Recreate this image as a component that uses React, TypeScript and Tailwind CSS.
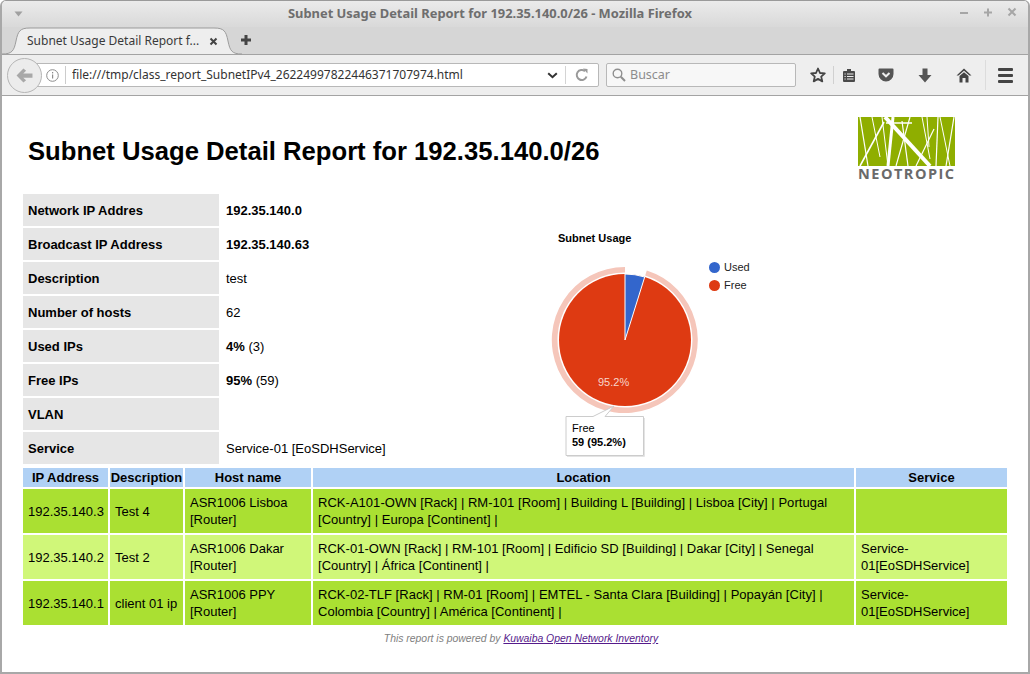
import { ReactNode } from 'react';

const info: { label: string; value: ReactNode }[] = [
  { label: 'Network IP Addres', value: <b>192.35.140.0</b> },
  { label: 'Broadcast IP Address', value: <b>192.35.140.63</b> },
  { label: 'Description', value: 'test' },
  { label: 'Number of hosts', value: '62' },
  { label: 'Used IPs', value: <span><b>4%</b> (3)</span> },
  { label: 'Free IPs', value: <span><b>95%</b> (59)</span> },
  { label: 'VLAN', value: '' },
  { label: 'Service', value: 'Service-01 [EoSDHService]' },
];

const rows = [
  {
    ip: '192.35.140.3',
    desc: 'Test 4',
    host: 'ASR1006 Lisboa [Router]',
    location: 'RCK-A101-OWN [Rack] | RM-101 [Room] | Building L [Building] | Lisboa [City] | Portugal [Country] | Europa [Continent] |',
    service: '',
    bg: 'bg-[#aae032]',
  },
  {
    ip: '192.35.140.2',
    desc: 'Test 2',
    host: 'ASR1006 Dakar [Router]',
    location: 'RCK-01-OWN [Rack] | RM-101 [Room] | Edificio SD [Building] | Dakar [City] | Senegal [Country] | África [Continent] |',
    service: 'Service-01[EoSDHService]',
    bg: 'bg-[#d0f779]',
  },
  {
    ip: '192.35.140.1',
    desc: 'client 01 ip',
    host: 'ASR1006 PPY [Router]',
    location: 'RCK-02-TLF [Rack] | RM-01 [Room] | EMTEL - Santa Clara [Building] | Popayán [City] | Colombia [Country] | América [Continent] |',
    service: 'Service-01[EoSDHService]',
    bg: 'bg-[#aae032]',
  },
];

function Logo() {
  return (
    <div className="flex w-[97px] flex-col">
      <svg width="97" height="49" viewBox="0 0 97 49" className="block">
        <rect width="97" height="49" fill="#8fae00" />
        <g stroke="#fff" fill="none">
          <path d="M2 0 L10 49" strokeWidth="1.2" />
          <path d="M14 0 L22 40" strokeWidth="1" />
          <path d="M26 5 L2 49" strokeWidth="1.6" />
          <path d="M24 0 L30 49" strokeWidth="1" />
          <path d="M27 0 L72 49" strokeWidth="4" />
          <path d="M35 0 L30 49" strokeWidth="3" />
          <path d="M44 4 L50 49" strokeWidth="1.2" />
          <path d="M52 0 L38 49" strokeWidth="1.2" />
          <path d="M64 0 L72 42" strokeWidth="1" />
          <path d="M76 12 L58 49" strokeWidth="1.2" />
          <path d="M69 0 L71 30" strokeWidth="1" />
          <path d="M80 0 L78 49" strokeWidth="1.2" />
          <path d="M82 0 L92 49" strokeWidth="1" />
          <path d="M96 0 L88 49" strokeWidth="1.2" />
          <path d="M28 6 L54 6" strokeWidth="1.6" />
        </g>
      </svg>
      <div className="mt-[1px] font-['Open_Sans',sans-serif] text-[14.5px] leading-[14px] font-bold tracking-[1.5px] whitespace-nowrap text-[#6a6a6a]">
        NEOTROPIC
      </div>
    </div>
  );
}

function Chart() {
  return (
    <svg width="230" height="240" viewBox="540 225 230 240" className="block font-['Liberation_Sans',sans-serif]">
      <text x="558" y="242" fontSize="11" fontWeight="700" fill="#000">Subnet Usage</text>
      {/* ring around the selected slice */}
      <path
        d="M646.8 270.4 A73 73 0 1 1 625 267 L625 272.5 A67.5 67.5 0 1 0 645.2 275.6 Z"
        fill="#f5c6ba"
      />
      <circle cx="625" cy="340" r="66" fill="#de3a12" />
      <path d="M625 340 L625 274 A66 66 0 0 1 644.7 277 Z" fill="#3366cc" stroke="#fff" strokeWidth="1" />
      <text x="598" y="386" fontSize="11" fill="#f7d6cc">95.2%</text>
      <circle cx="714.5" cy="267.5" r="5.5" fill="#3366cc" />
      <text x="724" y="271" fontSize="11" fill="#222">Used</text>
      <circle cx="714.5" cy="285.5" r="5.5" fill="#de3a12" />
      <text x="724" y="289" fontSize="11" fill="#222">Free</text>
      {/* tooltip with its pointer */}
      <path
        d="M566 416.5 L593 416.5 L614 406 L605 416.5 L643.5 416.5 L643.5 455.5 L566 455.5 Z"
        fill="#fff"
        stroke="#ccc"
        strokeWidth="1"
      />
      <path d="M644.5 418 L644.5 456.5 L567 456.5" fill="none" stroke="#e4e4e4" strokeWidth="1" />
      <text x="572" y="432" fontSize="11" fill="#000">Free</text>
      <text x="572" y="446" fontSize="11" fontWeight="700" fill="#000">59 (95.2%)</text>
    </svg>
  );
}

function Toolbar() {
  return (
    <div className="relative flex h-[41px] items-center border-b border-[#a3a3a3] bg-[#eeeeee] pl-[23px]">
      {/* back button sits over the start of the url bar */}
      <div className="absolute top-[3px] left-[5px] z-10 flex h-[35px] w-[35px] items-center justify-center rounded-full border border-[#b5b5b5] bg-[#ececec]">
        <svg width="17" height="15" viewBox="0 0 16 14">
          <path d="M7 0.5 L0.5 7 L7 13.5 L9.5 11.5 L6.8 9 L15.5 9 L15.5 5 L6.8 5 L9.5 2.5 Z" fill="#a8a8a8" />
        </svg>
      </div>
      <div className="flex h-[24px] w-[574px] items-center rounded-[2px] border border-[#b8b8b8] bg-white pl-[20px]">
        <svg width="13" height="13" viewBox="0 0 13 13" className="shrink-0">
          <circle cx="6.5" cy="6.5" r="5.8" fill="none" stroke="#8c8c8c" />
          <rect x="6" y="5.5" width="1.2" height="4" fill="#8c8c8c" />
          <rect x="6" y="3" width="1.2" height="1.4" fill="#8c8c8c" />
        </svg>
        <div className="mx-[6px] h-[18px] w-px bg-[#cccccc]" />
        <span className="flex-1 truncate font-['Noto_Sans',sans-serif] text-[12px] text-[#333]">file:///tmp/class_report_SubnetIPv4_26224997822446371707974.html</span>
        <svg width="11" height="7" viewBox="0 0 11 7" className="mr-[7px]">
          <path d="M1.2 1.2 L5.5 5.2 L9.8 1.2" fill="none" stroke="#333" strokeWidth="2" />
        </svg>
        <div className="h-[18px] w-px bg-[#d4d4d4]" />
        <svg width="14" height="14" viewBox="0 0 14 14" className="mx-[9px]">
          <path d="M11.5 8.5 A5 5 0 1 1 10 3.2" fill="none" stroke="#9a9a9a" strokeWidth="2" />
          <path d="M8 0.5 L12.5 1 L12.5 5.5 Z" fill="#9a9a9a" />
        </svg>
      </div>
      <div className="ml-[7px] flex h-[24px] w-[190px] items-center rounded-[2px] border border-[#b8b8b8] bg-[#f7f7f7] pl-[5px]">
        <svg width="14" height="14" viewBox="0 0 14 14">
          <circle cx="5.5" cy="5.5" r="4.3" fill="none" stroke="#8f8f8f" strokeWidth="1.4" />
          <path d="M8.8 8.8 L13 13" stroke="#8f8f8f" strokeWidth="2" />
        </svg>
        <span className="ml-[4px] font-['Noto_Sans',sans-serif] text-[12.5px] text-[#8c8c8c]">Buscar</span>
      </div>
      <svg width="16" height="16" viewBox="0 0 16 16" className="ml-[14px]">
        <path d="M8 1.5 L10 6 L14.8 6.4 L11.2 9.6 L12.3 14.4 L8 11.9 L3.7 14.4 L4.8 9.6 L1.2 6.4 L6 6 Z" fill="none" stroke="#444" strokeWidth="1.8" strokeLinejoin="round" />
      </svg>
      <div className="ml-[7px] h-[18px] w-px bg-[#d0d0d0]" />
      <svg width="14" height="15" viewBox="0 0 14 15" className="ml-[8px]">
        <path d="M1 4 Q1 3 2 3 H5 V1 H9 V3 H12 Q13 3 13 4 V13 Q13 14 12 14 H2 Q1 14 1 13 Z" fill="#4a4a4a" />
        <path d="M5 6 H11.5 M5 8.5 H11.5 M5 11 H11.5 M2.5 6 H3.7 M2.5 8.5 H3.7 M2.5 11 H3.7" stroke="#eee" strokeWidth="1" />
      </svg>
      <svg width="16" height="14" viewBox="0 0 16 14" className="ml-[22px]">
        <path d="M1.5 0.5 H14.5 A1 1 0 0 1 15.5 1.5 V6 A7.5 7.5 0 0 1 0.5 6 V1.5 A1 1 0 0 1 1.5 0.5 Z" fill="#555" />
        <path d="M4.5 5 L8 8.3 L11.5 5" fill="none" stroke="#eee" strokeWidth="2" />
      </svg>
      <svg width="14" height="15" viewBox="0 0 14 15" className="ml-[24px]">
        <path d="M4.5 0.5 H9.5 V7 H13.5 L7 14.5 L0.5 7 H4.5 Z" fill="#555" />
      </svg>
      <svg width="16" height="15" viewBox="0 0 16 15" className="ml-[24px]">
        <path d="M8 0.5 L15.5 7.5 L13.5 7.5 L8 2.8 L2.5 7.5 L0.5 7.5 Z" fill="#444" />
        <path d="M3.5 8 L8 4.2 L12.5 8 V14.5 H9.5 V10 H6.5 V14.5 H3.5 Z" fill="#444" />
      </svg>
      <div className="ml-[13px] h-[30px] w-px bg-[#dcdcdc]" />
      <div className="ml-[12px] flex w-[15px] flex-col gap-[3px]">
        <div className="h-[3px] rounded-[1px] bg-[#444]" />
        <div className="h-[3px] rounded-[1px] bg-[#444]" />
        <div className="h-[3px] rounded-[1px] bg-[#444]" />
      </div>
    </div>
  );
}

export default function App() {
  return (
    <div className="flex h-[674px] w-[1030px] flex-col overflow-hidden rounded-t-[6px] border-x-2 border-b-2 border-t border-x-[#a8a8a8] border-b-[#a8a8a8] border-t-[#9a9a9a] bg-white font-['Liberation_Sans',sans-serif] text-[13px] text-black">
      {/* title bar */}
      <div className="relative flex h-[26px] shrink-0 items-center justify-center bg-gradient-to-b from-[#ebebeb] to-[#d9d9d9] pr-[50px] font-['Noto_Sans',sans-serif] text-[12.9px] font-bold text-[#6e6e6e]">
        <svg width="9" height="6" viewBox="0 0 9 6" className="absolute top-[10px] left-[12px]">
          <path d="M0.5 0.5 H8.5 L4.5 5.5 Z" fill="#a0a0a0" />
        </svg>
        Subnet Usage Detail Report for 192.35.140.0/26 - Mozilla Firefox
        <div className="absolute top-[6px] right-[11px] flex items-center gap-[14px]">
          <svg width="10" height="10" viewBox="0 0 10 10"><path d="M1 6 H9" stroke="#a6a6a6" strokeWidth="2" /></svg>
          <svg width="10" height="10" viewBox="0 0 10 10"><path d="M1 5.5 H9 M5 1.5 V9.5" stroke="#a6a6a6" strokeWidth="2" /></svg>
          <svg width="10" height="10" viewBox="0 0 10 10"><path d="M1.5 1.5 L8.5 8.5 M8.5 1.5 L1.5 8.5" stroke="#a6a6a6" strokeWidth="2" /></svg>
        </div>
      </div>
      {/* tab strip */}
      <div className="relative flex h-[28px] shrink-0 items-end border-b border-[#a3a3a3] bg-[#d6d6d6]">
        <svg width="240" height="28" viewBox="0 0 240 28" className="absolute top-0 left-0">
          <path d="M0 27 C10 27 12 24 14 14 C16 4 18 1 28 1 H212 C222 1 224 4 226 14 C228 24 230 27 240 27 Z" fill="#eeeeee" stroke="none" />
          <path d="M0 27 C10 27 12 24 14 14 C16 4 18 1 28 1 H212 C222 1 224 4 226 14 C228 24 230 27 240 27" fill="none" stroke="#9c9c9c" />
        </svg>
        <div className="relative flex h-[27px] w-[230px] items-center pl-[25px] font-['Noto_Sans',sans-serif] text-[12px] whitespace-nowrap text-[#3a3a3a]">
          Subnet Usage Detail Report f...
          <svg width="9" height="9" viewBox="0 0 9 9" className="absolute top-[10px] left-[207px]">
            <path d="M1.5 1.5 L7.5 7.5 M7.5 1.5 L1.5 7.5" stroke="#444" strokeWidth="2" />
          </svg>
        </div>
        <svg width="10" height="10" viewBox="0 0 10 10" className="relative mb-[9px] ml-[9px]">
          <path d="M0 5 H10 M5 0 V10" stroke="#444" strokeWidth="3" />
        </svg>
      </div>
      <Toolbar />
      {/* report */}
      <div className="flex-1 px-[21px]">
        <div className="flex h-[98px] items-start justify-between">
          <h1 className="mt-[37px] pl-[5px] text-[25.65px] leading-[36px] font-bold whitespace-nowrap">
            Subnet Usage Detail Report for 192.35.140.0/26
          </h1>
          <div className="mt-[21px] mr-[52px]"><Logo /></div>
        </div>
        <div className="flex items-start">
          <div className="grid w-[517px] grid-cols-[196px_1fr] gap-[2px]">
            {info.map((row) => (
              <div key={row.label} className="contents">
                <div className="flex h-[32px] items-center bg-[#e6e6e6] pt-[1px] pl-[5px] font-bold">{row.label}</div>
                <div className="flex h-[32px] items-center pt-[1px] pl-[5px] whitespace-pre">{row.value}</div>
              </div>
            ))}
          </div>
          <div className="mt-[31px]"><Chart /></div>
        </div>
        <div className="mt-[3px] grid grid-cols-[85px_73px_126px_541px_151px] gap-[2px]">
          {['IP Address', 'Description', 'Host name', 'Location', 'Service'].map((h) => (
            <div key={h} className="flex h-[19px] items-center justify-center bg-[#b0d1f5] font-bold whitespace-nowrap">{h}</div>
          ))}
          {rows.map((r) => (
            <div key={r.ip} className="contents">
              <div className={`${r.bg} flex h-[44px] items-center pt-[1px] pl-[5px]`}>{r.ip}</div>
              <div className={`${r.bg} flex items-center pt-[1px] pl-[5px] whitespace-nowrap`}>{r.desc}</div>
              <div className={`${r.bg} flex items-center px-[5px] leading-[17px]`}>{r.host}</div>
              <div className={`${r.bg} flex items-center px-[5px] leading-[17px] tracking-[0.03px]`}>{r.location}</div>
              <div className={`${r.bg} flex items-center px-[5px] leading-[17px]`}>{r.service}</div>
            </div>
          ))}
        </div>
        <p className="mt-[6px] pl-[12px] text-center text-[10.4px] text-[#808080] italic">
          This report is powered by{' '}
          <span className="text-[#551a8b] underline">Kuwaiba Open Network Inventory</span>
        </p>
      </div>
    </div>
  );
}
